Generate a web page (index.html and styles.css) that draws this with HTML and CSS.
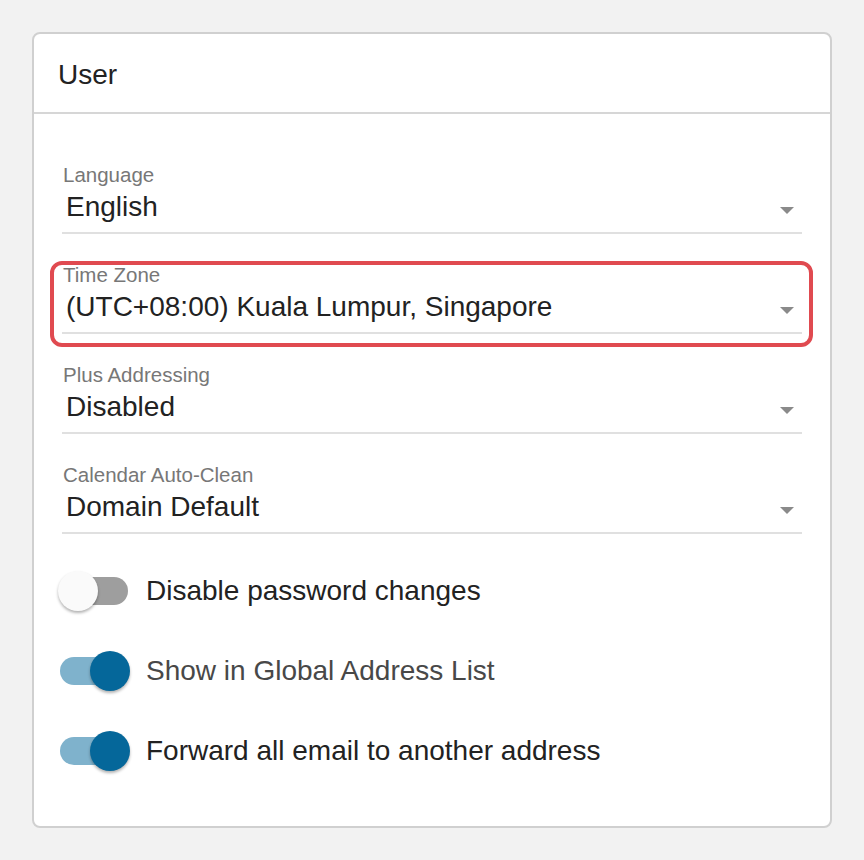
FILE: index.html
```html
<!DOCTYPE html>
<html>
<head>
<meta charset="utf-8">
<link rel="stylesheet" href="styles.css">
</head>
<body>
<div class="card">
  <div class="card-header">User</div>
  <div class="card-body">
    <div class="fields">
      <div class="field">
        <div class="field-label">Language</div>
        <div class="field-select"><span class="field-value">English</span><span class="caret"></span></div>
      </div>
      <div class="field highlighted">
        <div class="field-label">Time Zone</div>
        <div class="field-select"><span class="field-value">(UTC+08:00) Kuala Lumpur, Singapore</span><span class="caret"></span></div>
        <div class="highlight"></div>
      </div>
      <div class="field">
        <div class="field-label">Plus Addressing</div>
        <div class="field-select"><span class="field-value">Disabled</span><span class="caret"></span></div>
      </div>
      <div class="field">
        <div class="field-label">Calendar Auto-Clean</div>
        <div class="field-select"><span class="field-value">Domain Default</span><span class="caret"></span></div>
      </div>
    </div>
    <div class="toggles">
      <div class="toggle-row">
        <div class="switch"><div class="track"></div><div class="thumb"></div></div>
        <span class="toggle-label">Disable password changes</span>
      </div>
      <div class="toggle-row">
        <div class="switch on"><div class="track"></div><div class="thumb"></div></div>
        <span class="toggle-label muted">Show in Global Address List</span>
      </div>
      <div class="toggle-row">
        <div class="switch on"><div class="track"></div><div class="thumb"></div></div>
        <span class="toggle-label">Forward all email to another address</span>
      </div>
    </div>
  </div>
</div>
</body>
</html>
```

FILE: styles.css
```css
html, body {
  margin: 0;
  padding: 0;
  background: #f2f2f2;
  font-family: "Liberation Sans", Arial, sans-serif;
  color: #222;
}
body {
  padding: 32px 32px 32px 32px;
}
.card {
  width: 800px;
  height: 796px;
  box-sizing: border-box;
  background: #fff;
  border: 2px solid #d0d0d0;
  border-radius: 8px;
  display: flex;
  flex-direction: column;
}
.card-header {
  font-size: 28px;
  line-height: 32px;
  padding: 25px 22px 21px 24px;
  border-bottom: 2px solid #d6d6d6;
  color: #222;
}
.card-body {
  padding: 49px 28px 0 28px;
  display: flex;
  flex-direction: column;
}
.fields {
  display: flex;
  flex-direction: column;
  gap: 29px;
}
.field {
  position: relative;
  display: flex;
  flex-direction: column;
  gap: 4px;
}
.field-label {
  font-size: 20.5px;
  line-height: 24px;
  color: #777;
  padding-left: 1px;
}
.field-select {
  display: flex;
  align-items: center;
  justify-content: space-between;
  border-bottom: 2px solid #e0e0e0;
  padding: 0 8px 9px 4px;
}
.field-value {
  font-size: 28px;
  line-height: 32px;
  color: #222;
}
.caret {
  width: 0;
  height: 0;
  border-left: 7px solid transparent;
  border-right: 7px solid transparent;
  border-top: 7px solid #8a8a8a;
  margin-top: 6px;
}
.highlight {
  position: absolute;
  left: -12px;
  right: -11px;
  top: -2px;
  bottom: -13px;
  border: 4px solid #e04a50;
  border-radius: 12px;
  pointer-events: none;
}
.toggles {
  display: flex;
  flex-direction: column;
  margin-top: 17px;
}
.toggle-row {
  height: 80px;
  display: flex;
  align-items: center;
  gap: 16px;
  margin-left: -4px;
}
.switch {
  position: relative;
  width: 72px;
  height: 40px;
  flex: none;
}
.track {
  position: absolute;
  left: 2px;
  right: 2px;
  top: 6px;
  height: 28px;
  border-radius: 14px;
  background: #9e9e9e;
}
.thumb {
  position: absolute;
  top: 0;
  left: 0;
  width: 40px;
  height: 40px;
  border-radius: 50%;
  background: #fafafa;
  box-shadow: 0 2px 3px rgba(0,0,0,0.3);
}
.switch.on .track {
  background: #7fb2cc;
}
.switch.on .thumb {
  left: 32px;
  background: #05679a;
}
.toggle-label {
  font-size: 28px;
  line-height: 32px;
  color: #222;
}
.toggle-label.muted {
  color: #484848;
}
```
